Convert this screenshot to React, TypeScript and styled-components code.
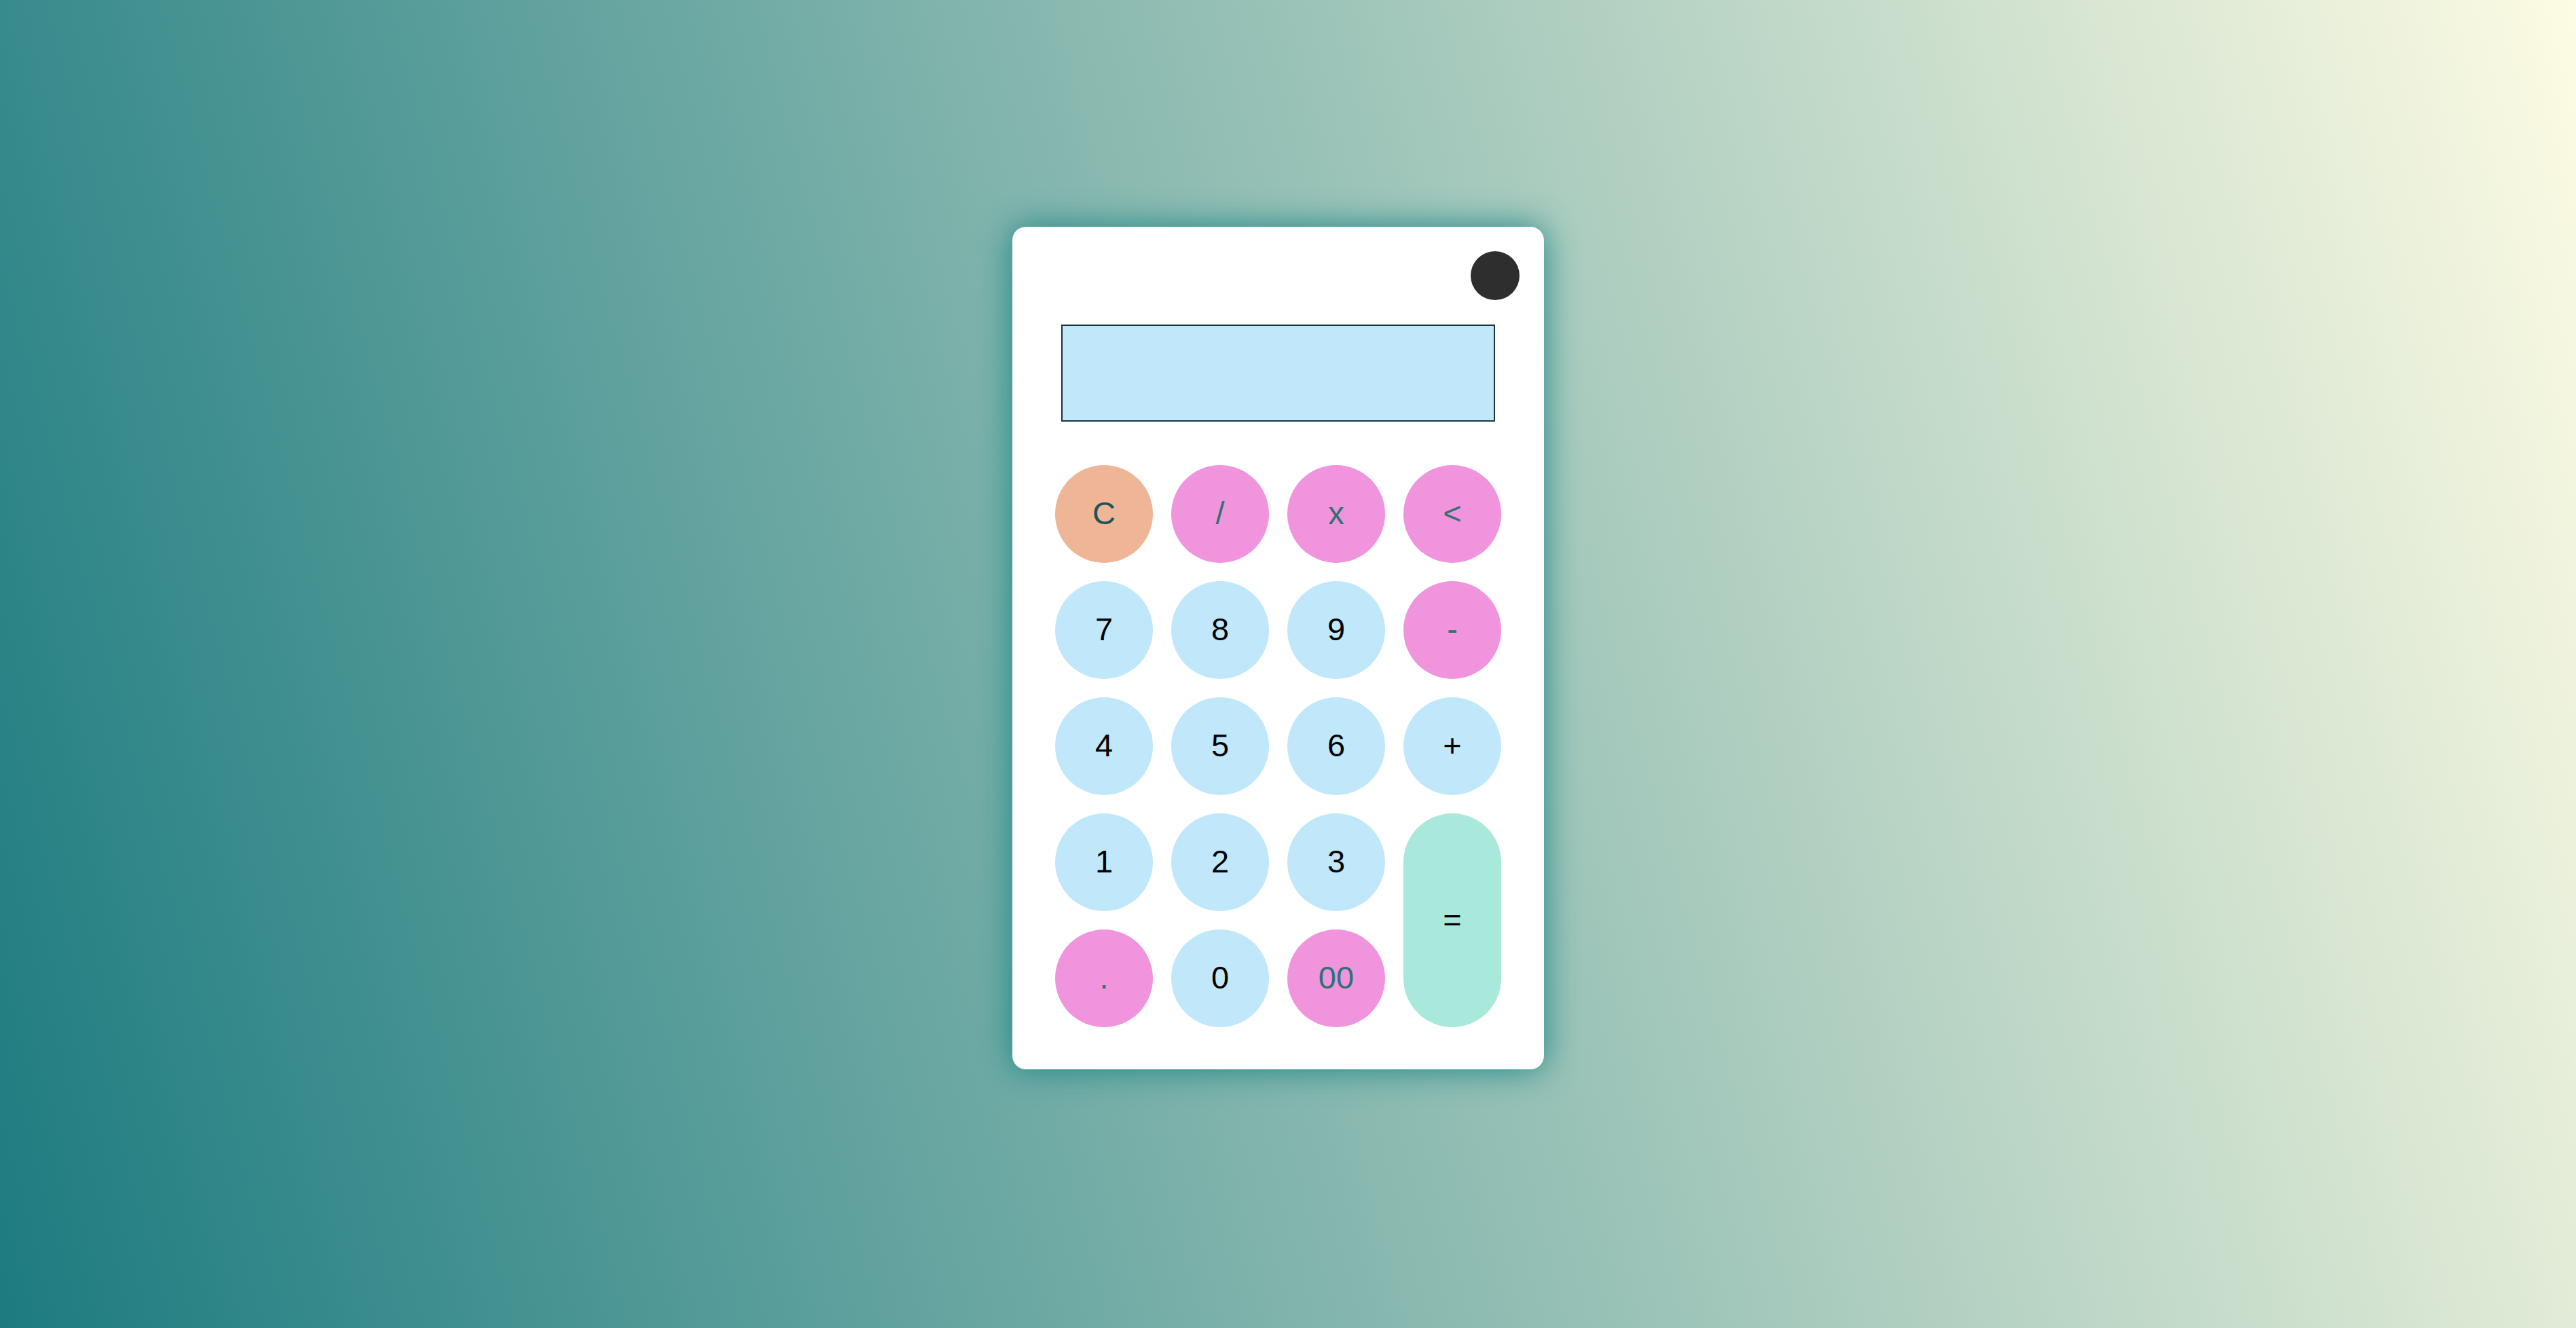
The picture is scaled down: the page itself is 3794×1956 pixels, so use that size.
import React from "react";
import styled, { createGlobalStyle } from "styled-components";

const GlobalStyle = createGlobalStyle`
  html, body {
    margin: 0;
    padding: 0;
  }
  body {
    background: linear-gradient(75deg, #1d7b80 0%, #fdfbe3 100%);
    background-attachment: fixed;
    font-family: "Liberation Sans", Arial, sans-serif;
    overflow: hidden;
  }
`;

const Page = styled.div`
  height: 100vh;
  box-sizing: border-box;
  display: flex;
  align-items: center;
  justify-content: center;
  padding: 0 29px 47px 0;
`;

const Card = styled.div`
  width: 783px;
  box-sizing: border-box;
  padding: 36px 36px 62px 36px;
  background: #ffffff;
  border-radius: 20px;
  box-shadow: 0 0 50px #1d8686;
  display: flex;
  flex-direction: column;
`;

const Header = styled.div`
  display: flex;
  justify-content: flex-end;
`;

const PowerDot = styled.div`
  width: 72px;
  height: 72px;
  border-radius: 50%;
  background: #2e2e2e;
`;

const Display = styled.div`
  margin: 36px 36px 0 36px;
  height: 143px;
  box-sizing: border-box;
  background: #c0e8fa;
  border: 2px solid #15363e;
`;

const Keypad = styled.div`
  margin: 64px 27px 0 27px;
  display: grid;
  grid-template-columns: repeat(4, 144px);
  grid-auto-rows: 144px;
  gap: 27px;
`;

type Tone = "clear" | "op" | "num" | "equals";

const bg: Record<Tone, string> = {
  clear: "#eeb597",
  op: "#f094de",
  num: "#c0e8fa",
  equals: "#a9e9dc",
};

const fg: Record<Tone, string> = {
  clear: "#1c5357",
  op: "#2f7273",
  num: "#000000",
  equals: "#000000",
};

const Key = styled.button<{ $tone: Tone; $tall?: boolean }>`
  border: none;
  outline: none;
  padding: 0 0 3px 0;
  margin: 0;
  border-radius: 72px;
  background: ${(p) => bg[p.$tone]};
  color: ${(p) => fg[p.$tone]};
  font-family: "Liberation Sans", Arial, sans-serif;
  font-size: 47px;
  line-height: 1;
  display: flex;
  align-items: center;
  justify-content: center;
  cursor: pointer;
  ${(p) => (p.$tall ? "grid-row: span 2;" : "")}
`;

const keys: { label: string; tone: Tone; tall?: boolean }[] = [
  { label: "C", tone: "clear" },
  { label: "/", tone: "op" },
  { label: "x", tone: "op" },
  { label: "<", tone: "op" },
  { label: "7", tone: "num" },
  { label: "8", tone: "num" },
  { label: "9", tone: "num" },
  { label: "-", tone: "op" },
  { label: "4", tone: "num" },
  { label: "5", tone: "num" },
  { label: "6", tone: "num" },
  { label: "+", tone: "num" },
  { label: "1", tone: "num" },
  { label: "2", tone: "num" },
  { label: "3", tone: "num" },
  { label: "=", tone: "equals", tall: true },
  { label: ".", tone: "op" },
  { label: "0", tone: "num" },
  { label: "00", tone: "op" },
];

export default function App() {
  return (
    <>
      <GlobalStyle />
      <Page>
        <Card>
          <Header>
            <PowerDot />
          </Header>
          <Display />
          <Keypad>
            {keys.map((k) => (
              <Key key={k.label} $tone={k.tone} $tall={k.tall}>
                {k.label}
              </Key>
            ))}
          </Keypad>
        </Card>
      </Page>
    </>
  );
}
